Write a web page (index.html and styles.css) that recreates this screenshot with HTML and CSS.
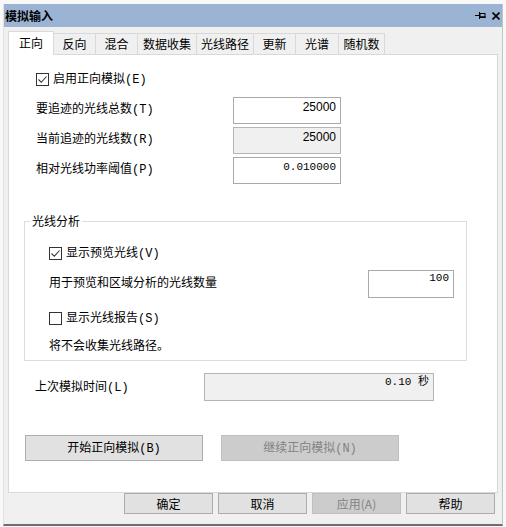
FILE: index.html
```html
<!DOCTYPE html>
<html lang="zh-CN">
<head>
<meta charset="utf-8">
<title>模拟输入</title>
<link rel="stylesheet" href="styles.css">
</head>
<body>
<div class="window">
  <div class="titlebar">
    <span class="title">模拟输入</span>
    <span class="tb-icons">
      <svg class="pin" width="11" height="7" viewBox="0 0 11 7"><path d="M0 3.5h4M4.5 0v7" stroke="#000" stroke-width="1" fill="none"/><rect x="5" y="1.5" width="5" height="4" fill="none" stroke="#000"/><path d="M5 5h5.5" stroke="#000" stroke-width="1.5"/></svg>
      <svg class="close" width="8" height="8" viewBox="0 0 8 8"><path d="M0.5 0.5L7.5 7.5M7.5 0.5L0.5 7.5" stroke="#000" stroke-width="1.7"/></svg>
    </span>
  </div>

  <div class="tabs">
    <div class="tab active t46">正向</div>
    <div class="tab t42">反向</div>
    <div class="tab t42">混合</div>
    <div class="tab t59">数据收集</div>
    <div class="tab t57">光线路径</div>
    <div class="tab t42">更新</div>
    <div class="tab t43">光谱</div>
    <div class="tab t46">随机数</div>
  </div>

  <div class="panel">
    <div class="sec-top">
      <div class="check-row">
        <span class="cb"><svg width="11" height="11" viewBox="0 0 11 11"><path d="M1.5 5.5L4.3 8.3L9.5 2.5" stroke="#333" stroke-width="1.1" fill="none"/></svg></span>
        <span>启用正向模拟<span class="acc">(E)</span></span>
      </div>
      <div class="field-row first">
        <span class="lbl">要追迹的光线总数<span class="acc">(T)</span></span>
        <div class="box num-sans">25000</div>
      </div>
      <div class="field-row">
        <span class="lbl">当前追迹的光线数<span class="acc">(R)</span></span>
        <div class="box ro num-sans">25000</div>
      </div>
      <div class="field-row">
        <span class="lbl">相对光线功率阈值<span class="acc">(P)</span></span>
        <div class="box num-mono">0.010000</div>
      </div>
    </div>

    <fieldset class="group">
      <legend>光线分析</legend>
      <div class="group-body">
        <div class="check-row g-first">
          <span class="cb"><svg width="11" height="11" viewBox="0 0 11 11"><path d="M1.5 5.5L4.3 8.3L9.5 2.5" stroke="#333" stroke-width="1.1" fill="none"/></svg></span>
          <span>显示预览光线<span class="acc">(V)</span></span>
        </div>
        <div class="g-field">
          <span class="lbl">用于预览和区域分析的光线数量</span>
          <div class="box small num-mono">100</div>
        </div>
        <div class="check-row g-second">
          <span class="cb"></span>
          <span>显示光线报告<span class="acc">(S)</span></span>
        </div>
        <div class="g-note">将不会收集光线路径。</div>
      </div>
    </fieldset>

    <div class="time-row">
      <span class="lbl">上次模拟时间<span class="acc">(L)</span></span>
      <div class="box ro wide num-mono">0.10 秒</div>
    </div>

    <div class="action-row">
      <button class="btn big">开始正向模拟<span class="acc">(B)</span></button>
      <button class="btn big disabled">继续正向模拟<span class="acc">(N)</span></button>
    </div>
  </div>

  <div class="footer">
    <button class="btn foot">确定</button>
    <button class="btn foot">取消</button>
    <button class="btn foot disabled">应用(A)</button>
    <button class="btn foot">帮助</button>
  </div>
</div>
</body>
</html>
```

FILE: styles.css
```css
* { box-sizing: border-box; }

body {
  margin: 0;
  background: #f8f8f8;
  font-family: "Noto Sans CJK SC", sans-serif;
  font-size: 12px;
  color: #000;
}

.window {
  margin: 4px 0 0 3px;
  width: 500px;
  height: 522px;
  border-left: 1px solid #e2e2e2;
  border-right: 1px solid #c4c4c4;
  border-bottom: 2px solid #6e6e6e;
  background: #f0f0f0;
  display: flex;
  flex-direction: column;
}

.titlebar {
  height: 23px;
  flex: none;
  background: #9cb4d3;
  display: flex;
  align-items: center;
  justify-content: space-between;
  padding: 0 2px 0 1px;
}

.title {
  font-weight: 700;
  line-height: 16px;
}

.tb-icons {
  display: flex;
  align-items: center;
  gap: 6px;
}

.tb-icons svg { display: block; }

.tabs {
  flex: none;
  display: flex;
  align-items: flex-end;
  height: 23px;
  margin: 4px 0 0 4px;
}

.tab {
  height: 21px;
  border-top: 1px solid #d9d9d9;
  border-right: 1px solid #d9d9d9;
  background: #f0f0f0;
  text-align: center;
  line-height: 16px;
  padding-top: 2px;
}

.tab.active {
  position: relative;
  z-index: 1;
  height: 24px;
  margin-bottom: -1px;
  border-left: 1px solid #d9d9d9;
  background: #fff;
  padding-top: 3px;
}

.t42 { width: 42px; }
.t43 { width: 43px; }
.t46 { width: 46px; }
.t57 { width: 57px; }
.t59 { width: 59px; }

.panel {
  flex: none;
  margin-left: 4px;
  width: 490px;
  height: 439px;
  border: 1px solid #d9d9d9;
  background: #fff;
}

.acc {
  font-family: "Liberation Mono", monospace;
  font-size: 12px;
}

.sec-top {
  padding: 16px 0 0 27px;
}

.check-row {
  display: flex;
  align-items: center;
  height: 16px;
  line-height: 16px;
}

.cb {
  width: 13px;
  height: 13px;
  border: 1px solid #333;
  background: #fff;
  margin-right: 4px;
  display: flex;
  align-items: center;
  justify-content: center;
}

.cb svg { display: block; }

.field-row {
  display: grid;
  grid-template-columns: 197px 108px;
  margin-top: 3px;
}

.field-row.first { margin-top: 10px; }

.lbl {
  line-height: 16px;
  padding-top: 3px;
}

.box {
  height: 27px;
  border: 1px solid #a9a9a9;
  background: #fff;
  text-align: right;
  padding: 2px 4px 0 0;
  line-height: 14px;
  white-space: pre;
}

.box.ro {
  background: #f0f0f0;
  border-color: #b4b4b4;
}

.num-sans {
  font-family: "Liberation Sans", sans-serif;
  font-size: 12px;
}

.num-mono {
  font-family: "Liberation Mono", "Noto Sans CJK SC", monospace;
  font-size: 11px;
}

.group {
  margin: 28px 0 0 15px;
  padding: 0 0 7px 0;
  width: 443px;
  min-width: 0;
  border: 1px solid #dcdcdc;
}

.group legend {
  margin-left: 5px;
  padding: 0 2px;
  line-height: 18px;
}

.group-body {
  padding-left: 24px;
}

.g-first { margin-top: 15px; }

.g-field {
  display: grid;
  grid-template-columns: 319px 86px;
  margin-top: 9px;
}

.g-field .lbl { padding-top: 4px; }

.box.small {
  height: 28px;
  padding-top: 1px;
  line-height: 12px;
}

.g-second { margin-top: 12px; }

.g-note {
  margin-top: 11px;
  line-height: 16px;
}

.time-row {
  display: grid;
  grid-template-columns: 169px 230px;
  margin: 12px 0 0 26px;
}

.time-row .lbl { padding-top: 5px; }

.box.wide {
  height: 28px;
  padding-top: 1px;
  line-height: 14px;
}

.action-row {
  display: flex;
  gap: 18px;
  margin: 34px 0 0 16px;
}

.btn {
  font-family: "Noto Sans CJK SC", sans-serif;
  font-size: 12px;
  color: #000;
  background: #e1e1e1;
  border: 1px solid #adadad;
  padding: 0;
  margin: 0;
  line-height: 16px;
}

.btn.disabled {
  background: #cccccc;
  border-color: #bfbfbf;
  color: #838383;
}

.btn.big {
  width: 178px;
  height: 26px;
}

.footer {
  flex: none;
  display: flex;
  justify-content: flex-end;
  gap: 5px;
  padding-right: 7px;
}

.btn.foot {
  width: 89px;
  height: 21px;
}
```
